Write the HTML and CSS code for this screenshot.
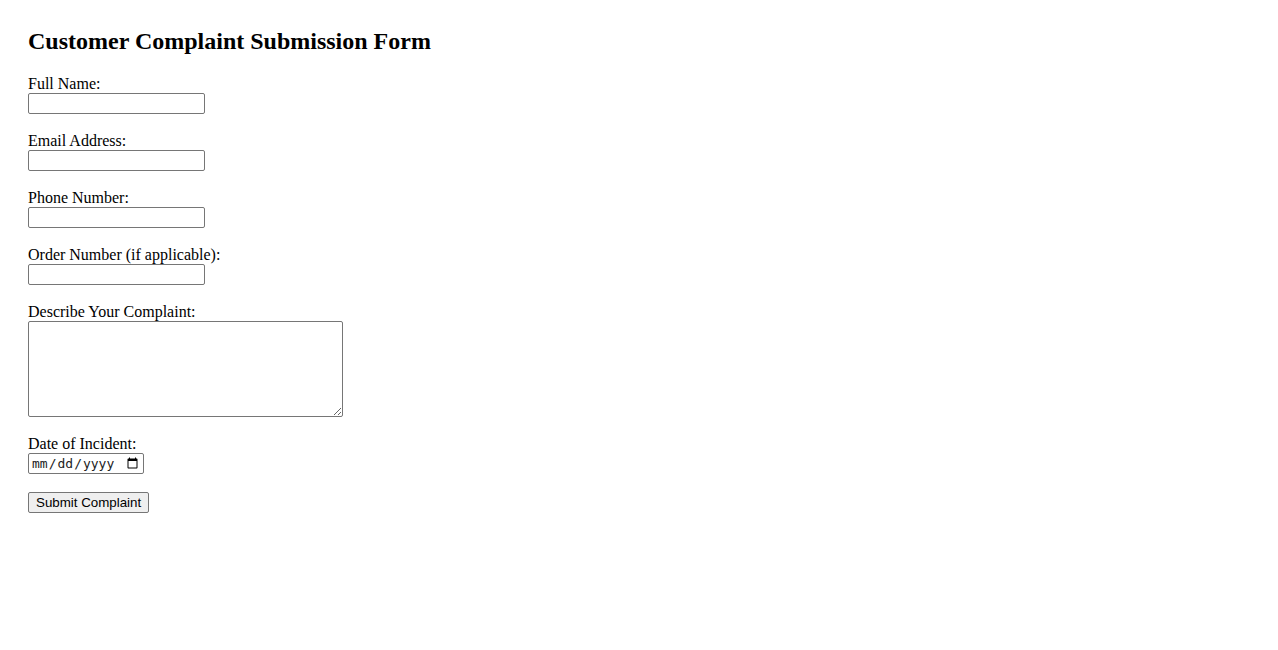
FILE: index.html
```html
<!DOCTYPE html>
<html lang="en">
<head>
<meta charset="utf-8">
<title>Customer Complaint Submission Form</title>
<link rel="stylesheet" href="styles.css">
</head>
<body class="page">
<h2 class="title">Customer Complaint Submission Form</h2>
<form class="form">
  <div class="field">
    <label class="label" for="name">Full Name:</label>
    <input class="text-input" type="text" id="name" name="name">
  </div>
  <div class="field">
    <label class="label" for="email">Email Address:</label>
    <input class="text-input" type="email" id="email" name="email">
  </div>
  <div class="field">
    <label class="label" for="phone">Phone Number:</label>
    <input class="text-input" type="tel" id="phone" name="phone">
  </div>
  <div class="field">
    <label class="label" for="order">Order Number (if applicable):</label>
    <input class="text-input" type="text" id="order" name="order">
  </div>
  <div class="field">
    <label class="label" for="complaint">Describe Your Complaint:</label>
    <textarea class="textarea" id="complaint" name="complaint"></textarea>
  </div>
  <div class="field">
    <label class="label" for="date">Date of Incident:</label>
    <input class="date-input" type="date" id="date" name="date">
  </div>
  <button class="submit" type="submit">Submit Complaint</button>
</form>
</body>
</html>
```

FILE: styles.css
```css
html, body {
  background: #ffffff;
}
.page {
  margin: 0;
  padding: 28px;
  font-family: "Liberation Serif", "Times New Roman", serif;
  font-size: 16px;
  color: #000000;
}
.title {
  margin: 0 0 20px 0;
  font-size: 24px;
  font-weight: bold;
  line-height: 27px;
}
.form {
  margin: 0;
}
.field {
  margin-bottom: 18px;
}
.label {
  display: block;
  line-height: 18px;
}
.text-input {
  display: block;
  box-sizing: border-box;
  width: 177px;
  height: 21px;
  margin: 0;
  padding: 1px 2px;
  border: 1px solid #767676;
  border-radius: 2px;
  font-family: "Liberation Sans", Arial, sans-serif;
  font-size: 13.33px;
  background: #ffffff;
}
.textarea {
  display: block;
  box-sizing: border-box;
  width: 315px;
  height: 96px;
  margin: 0;
  padding: 2px;
  border: 1px solid #767676;
  border-radius: 2px;
  font-family: "Liberation Mono", monospace;
  font-size: 13.33px;
  background: #ffffff;
}
.date-input {
  display: block;
  box-sizing: border-box;
  width: 116px;
  height: 21px;
  margin: 0;
  padding: 1px 2px;
  border: 1px solid #767676;
  border-radius: 2px;
  font-family: "DejaVu Sans Mono", monospace;
  font-size: 13px;
  color: #222222;
  background: #ffffff;
}
.submit {
  display: block;
  box-sizing: border-box;
  height: 21px;
  margin: 0;
  padding: 1px 7px;
  border: 1px solid #767676;
  border-radius: 2px;
  background: #efefef;
  font-family: "Liberation Sans", Arial, sans-serif;
  font-size: 13.33px;
  color: #000000;
}
```
